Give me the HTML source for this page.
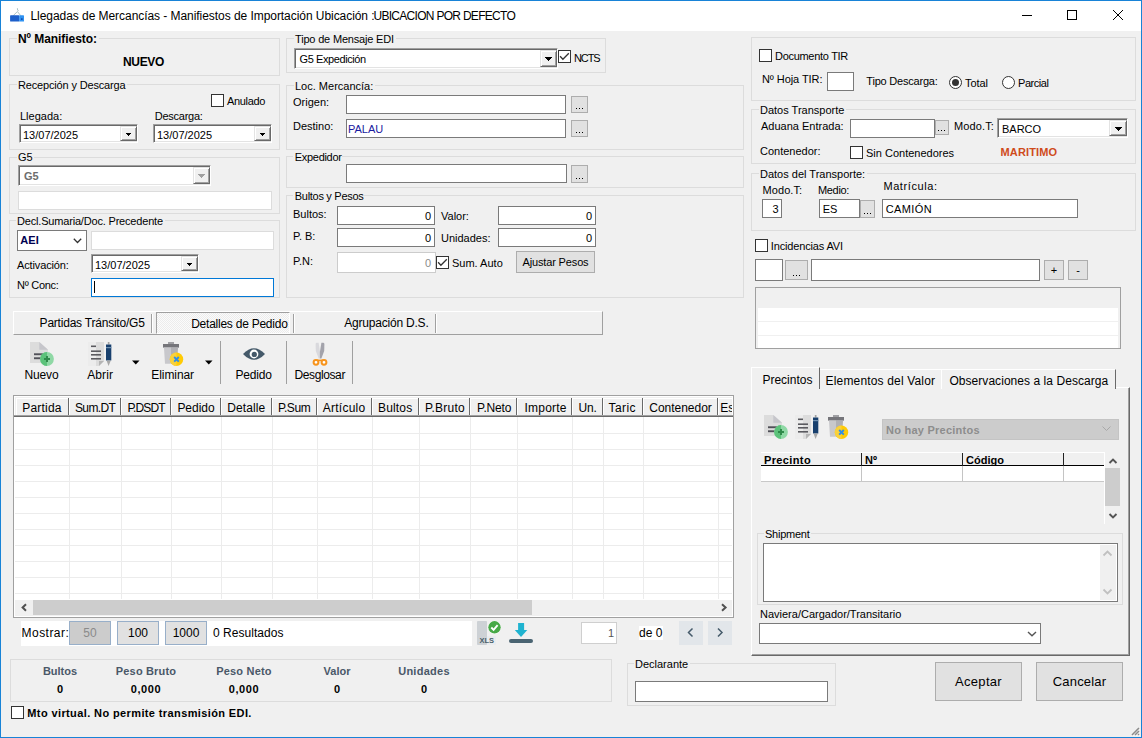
<!DOCTYPE html><html><head><meta charset="utf-8"><style>
html,body{margin:0;padding:0;width:1142px;height:738px;overflow:hidden;background:#f0f0f0}
body div{position:absolute;box-sizing:border-box}
.t{font-family:"Liberation Sans",sans-serif;line-height:20px;white-space:nowrap;height:20px}
</style></head><body>
<div style="left:0;top:0;width:1142px;height:738px;background:#f0f0f0;"></div>
<div style="left:0px;top:0px;width:1142px;height:31px;background:#fff;"></div>
<div style="left:0px;top:0px;width:1142px;height:1px;background:#1883d7;"></div>
<div style="left:0px;top:0px;width:1px;height:738px;background:#1883d7;"></div>
<div style="left:1141px;top:0px;width:1px;height:738px;background:#1883d7;"></div>
<div style="left:0px;top:737px;width:1142px;height:1px;background:#1883d7;"></div>
<svg style="position:absolute;left:8px;top:6px" width="18" height="18">
<path d="M9.4 5.5L4.4 10.5M9.4 5.5L12.7 9.6M9.4 2.2L9.6 4.2L10.6 4.6" stroke="#a5bcbc" stroke-width="0.9" fill="none"/>
<rect x="2.1" y="9.3" width="9.2" height="6.3" rx="0.6" fill="#1d5fca"/><rect x="11.2" y="9.3" width="4.8" height="6.3" rx="0.4" fill="#2f92f2"/><rect x="13" y="12.3" width="1.6" height="1.6" fill="#1448a8"/>
</svg>
<div class="t" style="left:30.50px;top:6px;font-size:12px;color:#000;letter-spacing:-0.055px;">Llegadas de Mercancías - Manifiestos de Importación Ubicación :</div>
<div class="t" style="left:373.50px;top:6px;font-size:12px;color:#000;letter-spacing:-0.711px;">UBICACION POR DEFECTO</div>
<div style="left:1022px;top:15px;width:10px;height:1px;background:#000;"></div>
<div style="left:1067px;top:10px;width:10px;height:10px;border:1px solid #000;"></div>
<svg style="position:absolute;left:1112px;top:9px" width="12" height="12"><path d="M1 1L11 11M11 1L1 11" stroke="#000" stroke-width="1"/></svg>
<div style="left:9px;top:38px;width:271px;height:38px;border:1px solid #dcdcdc;"></div>
<div style="left:17px;top:37px;width:82px;height:3px;background:#f0f0f0;"></div>
<div class="t" style="left:18.00px;top:29px;font-size:12px;color:#000;font-weight:bold;letter-spacing:-0.051px;">Nº Manifiesto:</div>
<div class="t" style="left:123.00px;top:52px;font-size:12px;color:#000;font-weight:bold;letter-spacing:-0.334px;">NUEVO</div>
<div style="left:9px;top:84px;width:271px;height:66px;border:1px solid #dcdcdc;"></div>
<div style="left:17px;top:83px;width:110px;height:3px;background:#f0f0f0;"></div>
<div class="t" style="left:18.00px;top:75px;font-size:11px;color:#000;letter-spacing:-0.161px;">Recepción y Descarga</div>
<div style="left:211px;top:94px;width:13px;height:13px;background:#fff;border:1px solid #333;"></div>
<div class="t" style="left:227.00px;top:91px;font-size:11px;color:#000;letter-spacing:-0.344px;">Anulado</div>
<div class="t" style="left:20.00px;top:106px;font-size:11px;color:#000;">Llegada:</div>
<div class="t" style="left:154.70px;top:106px;font-size:11px;color:#000;letter-spacing:-0.240px;">Descarga:</div>
<div style="left:19px;top:124px;width:119px;height:19px;background:#fff;border:1px solid;border-color:#a0a0a0 #fff #fff #a0a0a0;box-shadow:inset 1px 1px #696969,inset -1px -1px #e3e3e3;"></div>
<div style="left:120px;top:126px;width:17px;height:15px;background:#f0f0f0;border:1px solid;border-color:#e3e3e3 #696969 #696969 #e3e3e3;box-shadow:inset 1px 1px #fff,inset -1px -1px #a0a0a0;"></div>
<div style="left:126px;top:133px;width:5px;height:1px;background:#000;"></div>
<div style="left:127px;top:134px;width:3px;height:1px;background:#000;"></div>
<div style="left:128px;top:135px;width:1px;height:1px;background:#000;"></div>
<div class="t" style="left:23.00px;top:125px;font-size:11px;color:#000;">13/07/2025</div>
<div style="left:153px;top:124px;width:119px;height:19px;background:#fff;border:1px solid;border-color:#a0a0a0 #fff #fff #a0a0a0;box-shadow:inset 1px 1px #696969,inset -1px -1px #e3e3e3;"></div>
<div style="left:254px;top:126px;width:17px;height:15px;background:#f0f0f0;border:1px solid;border-color:#e3e3e3 #696969 #696969 #e3e3e3;box-shadow:inset 1px 1px #fff,inset -1px -1px #a0a0a0;"></div>
<div style="left:260px;top:133px;width:5px;height:1px;background:#000;"></div>
<div style="left:261px;top:134px;width:3px;height:1px;background:#000;"></div>
<div style="left:262px;top:135px;width:1px;height:1px;background:#000;"></div>
<div class="t" style="left:157.00px;top:125px;font-size:11px;color:#000;">13/07/2025</div>
<div style="left:9px;top:157px;width:271px;height:57px;border:1px solid #dcdcdc;"></div>
<div style="left:17px;top:156px;width:17px;height:3px;background:#f0f0f0;"></div>
<div class="t" style="left:18.00px;top:147px;font-size:11px;color:#000;">G5</div>
<div style="left:18px;top:165px;width:193px;height:21px;background:#fff;border:1px solid;border-color:#a0a0a0 #fff #fff #a0a0a0;box-shadow:inset 1px 1px #696969,inset -1px -1px #e3e3e3;"></div>
<div style="left:193px;top:167px;width:17px;height:17px;background:#f0f0f0;border:1px solid;border-color:#e3e3e3 #696969 #696969 #e3e3e3;box-shadow:inset 1px 1px #fff,inset -1px -1px #a0a0a0;"></div>
<div style="left:198px;top:174px;width:7px;height:1px;background:#a0a0a0;"></div>
<div style="left:199px;top:175px;width:5px;height:1px;background:#a0a0a0;"></div>
<div style="left:200px;top:176px;width:3px;height:1px;background:#a0a0a0;"></div>
<div style="left:201px;top:177px;width:1px;height:1px;background:#a0a0a0;"></div>
<div class="t" style="left:24.00px;top:166px;font-size:11px;color:#6d6d6d;font-weight:bold;">G5</div>
<div style="left:18px;top:191px;width:254px;height:19px;background:#fff;border:1px solid #dcdcdc;"></div>
<div style="left:9px;top:220px;width:271px;height:78px;border:1px solid #dcdcdc;"></div>
<div style="left:16px;top:219px;width:149px;height:3px;background:#f0f0f0;"></div>
<div class="t" style="left:17.00px;top:211px;font-size:11px;color:#000;letter-spacing:-0.182px;">Decl.Sumaria/Doc. Precedente</div>
<div style="left:17px;top:230px;width:70px;height:21px;background:#fff;border:1px solid #7a7a7a;"></div>
<div class="t" style="left:20.30px;top:230px;font-size:11px;color:#000050;font-weight:bold;letter-spacing:0.085px;">AEI</div>
<svg style="position:absolute;left:73px;top:238px" width="10" height="6"><polyline points="0.8,0.8 4.5,4.5 8.2,0.8" fill="none" stroke="#333" stroke-width="1.3"/></svg>
<div style="left:91px;top:231px;width:183px;height:19px;background:#fff;border:1px solid #dcdcdc;"></div>
<div class="t" style="left:17.00px;top:255px;font-size:11px;color:#000;letter-spacing:-0.129px;">Activación:</div>
<div style="left:91px;top:254px;width:108px;height:19px;background:#fff;border:1px solid;border-color:#a0a0a0 #fff #fff #a0a0a0;box-shadow:inset 1px 1px #696969,inset -1px -1px #e3e3e3;"></div>
<div style="left:181px;top:256px;width:17px;height:15px;background:#f0f0f0;border:1px solid;border-color:#e3e3e3 #696969 #696969 #e3e3e3;box-shadow:inset 1px 1px #fff,inset -1px -1px #a0a0a0;"></div>
<div style="left:187px;top:263px;width:5px;height:1px;background:#000;"></div>
<div style="left:188px;top:264px;width:3px;height:1px;background:#000;"></div>
<div style="left:189px;top:265px;width:1px;height:1px;background:#000;"></div>
<div class="t" style="left:95.00px;top:255px;font-size:11px;color:#000;">13/07/2025</div>
<div class="t" style="left:17.00px;top:275px;font-size:11px;color:#000;letter-spacing:-0.271px;">Nº Conc:</div>
<div style="left:91px;top:278px;width:183px;height:19px;background:#fff;border:1px solid #0078d7;"></div>
<div style="left:94px;top:281px;width:1px;height:12px;background:#000;"></div>
<div style="left:286px;top:38px;width:320px;height:35px;border:1px solid #dcdcdc;"></div>
<div style="left:294px;top:37px;width:102px;height:3px;background:#f0f0f0;"></div>
<div class="t" style="left:295.00px;top:29px;font-size:11px;color:#000;letter-spacing:-0.178px;">Tipo de Mensaje EDI</div>
<div style="left:294px;top:48px;width:264px;height:21px;background:#fff;border:1px solid;border-color:#a0a0a0 #fff #fff #a0a0a0;box-shadow:inset 1px 1px #696969,inset -1px -1px #e3e3e3;"></div>
<div style="left:540px;top:50px;width:17px;height:17px;background:#f0f0f0;border:1px solid;border-color:#e3e3e3 #696969 #696969 #e3e3e3;box-shadow:inset 1px 1px #fff,inset -1px -1px #a0a0a0;"></div>
<div style="left:545px;top:57px;width:7px;height:1px;background:#000;"></div>
<div style="left:546px;top:58px;width:5px;height:1px;background:#000;"></div>
<div style="left:547px;top:59px;width:3px;height:1px;background:#000;"></div>
<div style="left:548px;top:60px;width:1px;height:1px;background:#000;"></div>
<div class="t" style="left:299.50px;top:49px;font-size:11px;color:#000;letter-spacing:-0.407px;">G5 Expedición</div>
<div style="left:558px;top:50px;width:13px;height:13px;background:#fff;border:1px solid #333;"></div>
<svg style="position:absolute;left:558px;top:50px" width="13" height="13"><polyline points="2.1,6.3 4.9,9.2 10.8,3.3" fill="none" stroke="#333" stroke-width="1.3"/></svg>
<div class="t" style="left:574.00px;top:48px;font-size:11px;color:#000;letter-spacing:-1.109px;">NCTS</div>
<div style="left:286px;top:85px;width:458px;height:65px;border:1px solid #dcdcdc;"></div>
<div style="left:294px;top:84px;width:81px;height:3px;background:#f0f0f0;"></div>
<div class="t" style="left:295.00px;top:76px;font-size:11px;color:#000;">Loc. Mercancía:</div>
<div class="t" style="left:293.00px;top:92px;font-size:11px;color:#000;">Origen:</div>
<div style="left:346px;top:95px;width:220px;height:19px;background:#fff;border:1px solid #7a7a7a;"></div>
<div style="left:571px;top:96px;width:17px;height:17px;background:#e1e1e1;border:1px solid #adadad;"></div>
<div style="left:576px;top:108px;width:1px;height:1px;background:#000;"></div>
<div style="left:579px;top:108px;width:1px;height:1px;background:#000;"></div>
<div style="left:582px;top:108px;width:1px;height:1px;background:#000;"></div>
<div class="t" style="left:293.00px;top:116px;font-size:11px;color:#000;">Destino:</div>
<div style="left:346px;top:119px;width:220px;height:19px;background:#fff;border:1px solid #7a7a7a;"></div>
<div class="t" style="left:348.00px;top:119px;font-size:11px;color:#1a1aa0;">PALAU</div>
<div style="left:571px;top:120px;width:17px;height:17px;background:#e1e1e1;border:1px solid #adadad;"></div>
<div style="left:576px;top:132px;width:1px;height:1px;background:#000;"></div>
<div style="left:579px;top:132px;width:1px;height:1px;background:#000;"></div>
<div style="left:582px;top:132px;width:1px;height:1px;background:#000;"></div>
<div style="left:286px;top:156px;width:458px;height:32px;border:1px solid #dcdcdc;"></div>
<div style="left:293px;top:155px;width:49px;height:3px;background:#f0f0f0;"></div>
<div class="t" style="left:294.80px;top:147px;font-size:11px;color:#000;letter-spacing:-0.307px;">Expedidor</div>
<div style="left:346px;top:164px;width:221px;height:19px;background:#fff;border:1px solid #7a7a7a;"></div>
<div style="left:571px;top:165px;width:17px;height:18px;background:#e1e1e1;border:1px solid #adadad;"></div>
<div style="left:576px;top:178px;width:1px;height:1px;background:#000;"></div>
<div style="left:579px;top:178px;width:1px;height:1px;background:#000;"></div>
<div style="left:582px;top:178px;width:1px;height:1px;background:#000;"></div>
<div style="left:286px;top:195px;width:458px;height:103px;border:1px solid #dcdcdc;"></div>
<div style="left:293px;top:194px;width:71px;height:3px;background:#f0f0f0;"></div>
<div class="t" style="left:294.80px;top:186px;font-size:11px;color:#000;letter-spacing:-0.294px;">Bultos y Pesos</div>
<div class="t" style="left:293.00px;top:204px;font-size:11px;color:#000;">Bultos:</div>
<div style="left:337px;top:206px;width:98px;height:19px;background:#fff;border:1px solid #7a7a7a;"></div>
<div class="t" style="left:424.88px;top:206px;font-size:11px;color:#000;">0</div>
<div class="t" style="left:441.00px;top:206px;font-size:11px;color:#000;">Valor:</div>
<div style="left:498px;top:206px;width:98px;height:19px;background:#fff;border:1px solid #7a7a7a;"></div>
<div class="t" style="left:585.88px;top:206px;font-size:11px;color:#000;">0</div>
<div class="t" style="left:293.00px;top:226px;font-size:11px;color:#000;">P. B:</div>
<div style="left:337px;top:228px;width:98px;height:19px;background:#fff;border:1px solid #7a7a7a;"></div>
<div class="t" style="left:424.88px;top:228px;font-size:11px;color:#000;">0</div>
<div class="t" style="left:441.00px;top:228px;font-size:11px;color:#000;">Unidades:</div>
<div style="left:498px;top:228px;width:98px;height:19px;background:#fff;border:1px solid #7a7a7a;"></div>
<div class="t" style="left:585.88px;top:228px;font-size:11px;color:#000;">0</div>
<div class="t" style="left:293.00px;top:251px;font-size:11px;color:#000;">P.N:</div>
<div style="left:337px;top:252px;width:99px;height:21px;background:#fff;border:1px solid #cccccc;"></div>
<div class="t" style="left:424.88px;top:253px;font-size:11px;color:#8a8a8a;">0</div>
<div style="left:436px;top:256px;width:13px;height:13px;background:#fff;border:1px solid #333;"></div>
<svg style="position:absolute;left:436px;top:256px" width="13" height="13"><polyline points="2.1,6.3 4.9,9.2 10.8,3.3" fill="none" stroke="#333" stroke-width="1.3"/></svg>
<div class="t" style="left:452.00px;top:253px;font-size:11px;color:#000;">Sum. Auto</div>
<div style="left:516px;top:251px;width:79px;height:22px;background:#e1e1e1;border:1px solid #adadad;"></div>
<div class="t" style="left:522.50px;top:252px;font-size:11px;color:#000;letter-spacing:-0.147px;">Ajustar Pesos</div>
<div style="left:751px;top:37px;width:385px;height:64px;border:1px solid #dcdcdc;"></div>
<div style="left:759px;top:49px;width:13px;height:13px;background:#fff;border:1px solid #333;"></div>
<div class="t" style="left:775.00px;top:46px;font-size:11px;color:#000;letter-spacing:-0.297px;">Documento TIR</div>
<div class="t" style="left:762.00px;top:69px;font-size:11px;color:#000;letter-spacing:-0.073px;">Nº Hoja TIR:</div>
<div style="left:827px;top:72px;width:27px;height:19px;background:#fff;border:1px solid #7a7a7a;"></div>
<div class="t" style="left:866.30px;top:71px;font-size:11px;color:#000;letter-spacing:-0.208px;">Tipo Descarga:</div>
<svg style="position:absolute;left:948px;top:76px" width="15" height="14"><circle cx="7.5" cy="6.5" r="6" fill="#fff" stroke="#333" stroke-width="1"/><circle cx="7.5" cy="6.5" r="3.5" fill="#333"/></svg>
<div class="t" style="left:965.00px;top:73px;font-size:11px;color:#000;letter-spacing:-0.050px;">Total</div>
<svg style="position:absolute;left:1001px;top:76px" width="15" height="14"><circle cx="7.5" cy="6.5" r="6" fill="#fff" stroke="#333" stroke-width="1"/></svg>
<div class="t" style="left:1018.00px;top:73px;font-size:11px;color:#000;letter-spacing:-0.446px;">Parcial</div>
<div style="left:751px;top:109px;width:385px;height:55px;border:1px solid #dcdcdc;"></div>
<div style="left:759px;top:108px;width:87px;height:3px;background:#f0f0f0;"></div>
<div class="t" style="left:760.00px;top:100px;font-size:11px;color:#000;">Datos Transporte</div>
<div class="t" style="left:761.00px;top:116px;font-size:11px;color:#000;">Aduana Entrada:</div>
<div style="left:850px;top:119px;width:85px;height:19px;background:#fff;border:1px solid #7a7a7a;"></div>
<div style="left:935px;top:120px;width:14px;height:15px;background:#e1e1e1;border:1px solid #adadad;"></div>
<div style="left:938px;top:130px;width:1px;height:1px;background:#000;"></div>
<div style="left:941px;top:130px;width:1px;height:1px;background:#000;"></div>
<div style="left:944px;top:130px;width:1px;height:1px;background:#000;"></div>
<div class="t" style="left:954.00px;top:116px;font-size:11px;color:#000;letter-spacing:0.121px;">Modo.T:</div>
<div style="left:997px;top:118px;width:131px;height:20px;background:#fff;border:1px solid;border-color:#a0a0a0 #fff #fff #a0a0a0;box-shadow:inset 1px 1px #696969,inset -1px -1px #e3e3e3;"></div>
<div style="left:1109px;top:120px;width:18px;height:16px;background:#f0f0f0;border:1px solid;border-color:#e3e3e3 #696969 #696969 #e3e3e3;box-shadow:inset 1px 1px #fff,inset -1px -1px #a0a0a0;"></div>
<div style="left:1115px;top:127px;width:7px;height:1px;background:#000;"></div>
<div style="left:1116px;top:128px;width:5px;height:1px;background:#000;"></div>
<div style="left:1117px;top:129px;width:3px;height:1px;background:#000;"></div>
<div style="left:1118px;top:130px;width:1px;height:1px;background:#000;"></div>
<div class="t" style="left:1002.00px;top:119px;font-size:11px;color:#000;">BARCO</div>
<div class="t" style="left:760.00px;top:141px;font-size:11px;color:#000;">Contenedor:</div>
<div style="left:850px;top:146px;width:13px;height:13px;background:#fff;border:1px solid #333;"></div>
<div class="t" style="left:866.00px;top:143px;font-size:11px;color:#000;">Sin Contenedores</div>
<div class="t" style="left:1000.50px;top:142px;font-size:11px;color:#cf4b1b;font-weight:bold;letter-spacing:0.138px;">MARITIMO</div>
<div style="left:751px;top:173px;width:385px;height:58px;border:1px solid #dcdcdc;"></div>
<div style="left:759px;top:172px;width:108px;height:3px;background:#f0f0f0;"></div>
<div class="t" style="left:760.00px;top:164px;font-size:11px;color:#000;">Datos del Transporte:</div>
<div class="t" style="left:762.60px;top:180px;font-size:11px;color:#000;letter-spacing:0.063px;">Modo.T:</div>
<div class="t" style="left:818.00px;top:180px;font-size:11px;color:#000;letter-spacing:-0.339px;">Medio:</div>
<div class="t" style="left:883.40px;top:176px;font-size:11px;color:#000;letter-spacing:0.599px;">Matrícula:</div>
<div style="left:762px;top:199px;width:20px;height:19px;background:#fff;border:1px solid #7a7a7a;"></div>
<div class="t" style="left:772.38px;top:199px;font-size:11px;color:#000;">3</div>
<div style="left:819px;top:199px;width:41px;height:19px;background:#fff;border:1px solid #7a7a7a;"></div>
<div class="t" style="left:822.70px;top:199px;font-size:11px;color:#000;">ES</div>
<div style="left:860px;top:200px;width:15px;height:18px;background:#e1e1e1;border:1px solid #adadad;"></div>
<div style="left:864px;top:213px;width:1px;height:1px;background:#000;"></div>
<div style="left:867px;top:213px;width:1px;height:1px;background:#000;"></div>
<div style="left:870px;top:213px;width:1px;height:1px;background:#000;"></div>
<div style="left:882px;top:199px;width:196px;height:19px;background:#fff;border:1px solid #7a7a7a;"></div>
<div class="t" style="left:885.70px;top:199px;font-size:11px;color:#000;letter-spacing:0.400px;">CAMIÓN</div>
<div style="left:755px;top:239px;width:13px;height:13px;background:#fff;border:1px solid #333;"></div>
<div class="t" style="left:770.80px;top:236px;font-size:11px;color:#000;letter-spacing:-0.150px;">Incidencias AVI</div>
<div style="left:755px;top:259px;width:28px;height:22px;background:#fff;border:1px solid #7a7a7a;"></div>
<div style="left:785px;top:260px;width:23px;height:20px;background:#e1e1e1;border:1px solid #adadad;"></div>
<div style="left:793px;top:275px;width:1px;height:1px;background:#000;"></div>
<div style="left:796px;top:275px;width:1px;height:1px;background:#000;"></div>
<div style="left:799px;top:275px;width:1px;height:1px;background:#000;"></div>
<div style="left:811px;top:259px;width:229px;height:22px;background:#fff;border:1px solid #7a7a7a;"></div>
<div style="left:1044px;top:260px;width:20px;height:20px;background:#e1e1e1;border:1px solid #adadad;"></div>
<div class="t" style="left:1050.79px;top:260px;font-size:11px;color:#000;">+</div>
<div style="left:1068px;top:260px;width:20px;height:20px;background:#e1e1e1;border:1px solid #adadad;"></div>
<div class="t" style="left:1076.17px;top:260px;font-size:11px;color:#000;">-</div>
<div style="left:755px;top:287px;width:366px;height:62px;background:#f0f0f0;border:1px solid #a0a0a0;"></div>
<div style="left:758px;top:308px;width:360px;height:40px;background:#fff;"></div>
<div style="left:758px;top:321px;width:360px;height:1px;background:#f0f0f0;"></div>
<div style="left:758px;top:335px;width:360px;height:1px;background:#f0f0f0;"></div>
<div style="left:13px;top:311px;width:590px;height:24px;border:1px solid;border-color:#fff #a0a0a0 #a0a0a0 #fff;"></div>
<div class="t" style="left:39.60px;top:313px;font-size:12px;color:#000;letter-spacing:-0.218px;">Partidas Tránsito/G5</div>
<div style="left:151px;top:314px;width:1px;height:19px;background:#a0a0a0;"></div>
<div style="left:152px;top:314px;width:1px;height:19px;background:#fff;"></div>
<div style="left:156px;top:312px;width:134px;height:22px;border:1px solid;border-color:#a0a0a0 #fff #fff #a0a0a0;background:repeating-conic-gradient(#fbfbfb 0 25%,#ececec 0 50%) 0 0/2px 2px;"></div>
<div class="t" style="left:191.20px;top:314px;font-size:12px;color:#000;letter-spacing:-0.240px;">Detalles de Pedido</div>
<div style="left:293px;top:314px;width:1px;height:19px;background:#a0a0a0;"></div>
<div style="left:294px;top:314px;width:1px;height:19px;background:#fff;"></div>
<div class="t" style="left:344.20px;top:313px;font-size:12px;color:#000;letter-spacing:-0.204px;">Agrupación D.S.</div>
<div style="left:435px;top:314px;width:1px;height:19px;background:#a0a0a0;"></div>
<div style="left:436px;top:314px;width:1px;height:19px;background:#fff;"></div>
<svg style="position:absolute;left:0;top:0;overflow:visible" width="1" height="1">
<path d="M30 342H39.3L48 349.8V363H30Z" fill="#dcdcdc"/><path d="M39.3 342V349.8H48Z" fill="#c6c6cb"/><rect x="34" y="353.3" width="9" height="1.9" fill="#505058"/><rect x="34" y="357.3" width="8" height="1.9" fill="#505058"/><circle cx="47" cy="359" r="6.9" fill="#8fd8a5"/><path d="M47 352.1A6.9 6.9 0 0 0 47 365.9Z" fill="#5cc27a"/><rect x="44" y="358" width="6" height="2" fill="#2f8a4a"/><rect x="46" y="356" width="2" height="6" fill="#2f8a4a"/><rect x="88" y="342" width="8" height="24" fill="#ececec"/><path d="M96 342H104V361L99 366H96Z" fill="#dcdcdc"/><path d="M104 361L99 366V361Z" fill="#b5b5b5"/><rect x="91" y="345.5" width="5" height="1.6" fill="#5a5a5f"/><rect x="91" y="350.4" width="10" height="1.6" fill="#5a5a5f"/><rect x="91" y="354" width="10" height="1.6" fill="#5a5a5f"/><rect x="91" y="358" width="10" height="1.6" fill="#5a5a5f"/><rect x="107.8" y="342" width="1.7" height="2.5" fill="#a0a0a0"/><rect x="106" y="344.5" width="5.3" height="16" fill="#18406e"/><rect x="106" y="347" width="5.3" height="1.2" fill="#6d8fb0"/><path d="M106.5 360.5H110.8L108.6 366Z" fill="#a8a8a8"/><rect x="168" y="342" width="6" height="2" fill="#a0a0a4"/><rect x="163" y="344" width="16" height="3.6" fill="#75757a"/><path d="M164 347.6H171V363.7H165Z" fill="#c8c8cc"/><path d="M171 347.6H178L177 363.7H171Z" fill="#b0b0b4"/><circle cx="176.5" cy="359.3" r="6.7" fill="#ffcb05"/><path d="M176.5 352.6A6.7 6.7 0 0 0 176.5 366.0Z" fill="#f9d13b"/><path d="M174.2 357.0L178.8 361.6M178.8 357.0L174.2 361.6" stroke="#2f8ee8" stroke-width="1.9"/>
<path d="M132 360.5H139.5L135.75 364.5Z" fill="#000"/><path d="M205 360.5H212.5L208.75 364.5Z" fill="#000"/>
<!-- Pedido -->
<path d="M243 354Q254 342.5 265 354Q254 365.5 243 354Z" fill="#455a6a"/><circle cx="254" cy="354" r="4.4" fill="#fff"/><circle cx="254.3" cy="354.4" r="2.6" fill="#455a6a"/>
<!-- Desglosar -->
<path d="M315.6 344Q315.6 342.8 316.9 342.8H318.6L320.1 352V358.6H318.6L315.8 351Z" fill="#d9d9dd"/><path d="M324.4 344Q324.4 342.8 323.1 342.8H321.4L319.9 352V358.6H321.4L324.2 351Z" fill="#a3a3ab"/>
<rect x="317" y="359.6" width="6" height="1.6" fill="#f7941d"/><circle cx="316" cy="362.3" r="2.4" fill="#fff" stroke="#f7941d" stroke-width="2"/><circle cx="324" cy="362.3" r="2.4" fill="#fff" stroke="#f7941d" stroke-width="2"/>
</svg>
<div class="t" style="left:24.60px;top:365px;font-size:12px;color:#000;letter-spacing:-0.178px;">Nuevo</div>
<div class="t" style="left:87.20px;top:365px;font-size:12px;color:#000;letter-spacing:0.091px;">Abrir</div>
<div class="t" style="left:151.30px;top:365px;font-size:12px;color:#000;letter-spacing:-0.082px;">Eliminar</div>
<div class="t" style="left:235.40px;top:365px;font-size:12px;color:#000;letter-spacing:-0.177px;">Pedido</div>
<div class="t" style="left:294.50px;top:365px;font-size:12px;color:#000;letter-spacing:-0.392px;">Desglosar</div>
<div style="left:220px;top:341px;width:1px;height:43px;background:#a0a0a0;"></div>
<div style="left:286px;top:341px;width:1px;height:43px;background:#a0a0a0;"></div>
<div style="left:352px;top:341px;width:1px;height:43px;background:#a0a0a0;"></div>
<div style="left:13px;top:395px;width:721px;height:223px;background:#fff;border:1px solid #a0a0a0;"></div>
<div style="left:14px;top:396px;width:719px;height:221px;border:1px solid #fff;"></div>
<div style="left:15px;top:397px;width:717px;height:20px;background:#f0f0f0;"></div>
<div style="left:16px;top:398px;width:1px;height:18px;background:#fff;"></div>
<div style="left:16px;top:398px;width:52px;height:1px;background:#fff;"></div>
<div style="left:68px;top:398px;width:1px;height:18px;background:#696969;"></div>
<div style="left:69px;top:398px;width:1px;height:18px;background:#fff;"></div>
<div style="left:69px;top:398px;width:51px;height:1px;background:#fff;"></div>
<div style="left:120px;top:398px;width:1px;height:18px;background:#696969;"></div>
<div style="left:121px;top:398px;width:1px;height:18px;background:#fff;"></div>
<div style="left:121px;top:398px;width:49px;height:1px;background:#fff;"></div>
<div style="left:170px;top:398px;width:1px;height:18px;background:#696969;"></div>
<div style="left:171px;top:398px;width:1px;height:18px;background:#fff;"></div>
<div style="left:171px;top:398px;width:49px;height:1px;background:#fff;"></div>
<div style="left:220px;top:398px;width:1px;height:18px;background:#696969;"></div>
<div style="left:221px;top:398px;width:1px;height:18px;background:#fff;"></div>
<div style="left:221px;top:398px;width:50px;height:1px;background:#fff;"></div>
<div style="left:271px;top:398px;width:1px;height:18px;background:#696969;"></div>
<div style="left:272px;top:398px;width:1px;height:18px;background:#fff;"></div>
<div style="left:272px;top:398px;width:44px;height:1px;background:#fff;"></div>
<div style="left:316px;top:398px;width:1px;height:18px;background:#696969;"></div>
<div style="left:317px;top:398px;width:1px;height:18px;background:#fff;"></div>
<div style="left:317px;top:398px;width:54px;height:1px;background:#fff;"></div>
<div style="left:371px;top:398px;width:1px;height:18px;background:#696969;"></div>
<div style="left:372px;top:398px;width:1px;height:18px;background:#fff;"></div>
<div style="left:372px;top:398px;width:46px;height:1px;background:#fff;"></div>
<div style="left:418px;top:398px;width:1px;height:18px;background:#696969;"></div>
<div style="left:419px;top:398px;width:1px;height:18px;background:#fff;"></div>
<div style="left:419px;top:398px;width:50px;height:1px;background:#fff;"></div>
<div style="left:469px;top:398px;width:1px;height:18px;background:#696969;"></div>
<div style="left:470px;top:398px;width:1px;height:18px;background:#fff;"></div>
<div style="left:470px;top:398px;width:46px;height:1px;background:#fff;"></div>
<div style="left:516px;top:398px;width:1px;height:18px;background:#696969;"></div>
<div style="left:517px;top:398px;width:1px;height:18px;background:#fff;"></div>
<div style="left:517px;top:398px;width:54px;height:1px;background:#fff;"></div>
<div style="left:571px;top:398px;width:1px;height:18px;background:#696969;"></div>
<div style="left:572px;top:398px;width:1px;height:18px;background:#fff;"></div>
<div style="left:572px;top:398px;width:30px;height:1px;background:#fff;"></div>
<div style="left:602px;top:398px;width:1px;height:18px;background:#696969;"></div>
<div style="left:603px;top:398px;width:1px;height:18px;background:#fff;"></div>
<div style="left:603px;top:398px;width:39px;height:1px;background:#fff;"></div>
<div style="left:642px;top:398px;width:1px;height:18px;background:#696969;"></div>
<div style="left:643px;top:398px;width:1px;height:18px;background:#fff;"></div>
<div style="left:643px;top:398px;width:74px;height:1px;background:#fff;"></div>
<div style="left:717px;top:398px;width:1px;height:18px;background:#696969;"></div>
<div style="left:718px;top:398px;width:1px;height:18px;background:#fff;"></div>
<div style="left:718px;top:398px;width:14px;height:1px;background:#fff;"></div>
<div style="left:14px;top:415px;width:719px;height:1px;background:#a0a0a0;"></div>
<div style="left:14px;top:416px;width:719px;height:1px;background:#696969;"></div>
<div class="t" style="left:22.30px;top:398px;font-size:12px;color:#000;letter-spacing:0.198px;">Partida</div>
<div class="t" style="left:75.00px;top:398px;font-size:12px;color:#000;letter-spacing:-0.633px;">Sum.DT</div>
<div class="t" style="left:127.50px;top:398px;font-size:12px;color:#000;letter-spacing:-0.876px;">P.DSDT</div>
<div class="t" style="left:177.40px;top:398px;font-size:12px;color:#000;letter-spacing:-0.027px;">Pedido</div>
<div class="t" style="left:227.30px;top:398px;font-size:12px;color:#000;letter-spacing:0.092px;">Detalle</div>
<div class="t" style="left:277.90px;top:398px;font-size:12px;color:#000;letter-spacing:-0.431px;">P.Sum</div>
<div class="t" style="left:322.80px;top:398px;font-size:12px;color:#000;letter-spacing:0.241px;">Artículo</div>
<div class="t" style="left:378.10px;top:398px;font-size:12px;color:#000;letter-spacing:0.143px;">Bultos</div>
<div class="t" style="left:424.90px;top:398px;font-size:12px;color:#000;letter-spacing:0.207px;">P.Bruto</div>
<div class="t" style="left:477.10px;top:398px;font-size:12px;color:#000;letter-spacing:-0.154px;">P.Neto</div>
<div class="t" style="left:524.60px;top:398px;font-size:12px;color:#000;letter-spacing:0.190px;">Importe</div>
<div class="t" style="left:578.60px;top:398px;font-size:12px;color:#000;letter-spacing:-0.191px;">Un.</div>
<div class="t" style="left:608.60px;top:398px;font-size:12px;color:#000;letter-spacing:0.411px;">Taric</div>
<div class="t" style="left:649.30px;top:398px;font-size:12px;color:#000;letter-spacing:-0.020px;">Contenedor</div>
<div style="left:718px;top:398px;width:14px;height:18px;overflow:hidden"><div class="t" style="left:2.3px;top:0px;font-size:12px">Es</div></div>
<div style="left:15px;top:433px;width:717px;height:1px;background:#ececec;"></div>
<div style="left:15px;top:449px;width:717px;height:1px;background:#ececec;"></div>
<div style="left:15px;top:465px;width:717px;height:1px;background:#ececec;"></div>
<div style="left:15px;top:481px;width:717px;height:1px;background:#ececec;"></div>
<div style="left:15px;top:497px;width:717px;height:1px;background:#ececec;"></div>
<div style="left:15px;top:513px;width:717px;height:1px;background:#ececec;"></div>
<div style="left:15px;top:529px;width:717px;height:1px;background:#ececec;"></div>
<div style="left:15px;top:545px;width:717px;height:1px;background:#ececec;"></div>
<div style="left:15px;top:561px;width:717px;height:1px;background:#ececec;"></div>
<div style="left:15px;top:577px;width:717px;height:1px;background:#ececec;"></div>
<div style="left:15px;top:593px;width:717px;height:1px;background:#ececec;"></div>
<div style="left:69px;top:417px;width:1px;height:182px;background:#ececec;"></div>
<div style="left:121px;top:417px;width:1px;height:182px;background:#ececec;"></div>
<div style="left:171px;top:417px;width:1px;height:182px;background:#ececec;"></div>
<div style="left:221px;top:417px;width:1px;height:182px;background:#ececec;"></div>
<div style="left:272px;top:417px;width:1px;height:182px;background:#ececec;"></div>
<div style="left:317px;top:417px;width:1px;height:182px;background:#ececec;"></div>
<div style="left:372px;top:417px;width:1px;height:182px;background:#ececec;"></div>
<div style="left:419px;top:417px;width:1px;height:182px;background:#ececec;"></div>
<div style="left:470px;top:417px;width:1px;height:182px;background:#ececec;"></div>
<div style="left:517px;top:417px;width:1px;height:182px;background:#ececec;"></div>
<div style="left:572px;top:417px;width:1px;height:182px;background:#ececec;"></div>
<div style="left:603px;top:417px;width:1px;height:182px;background:#ececec;"></div>
<div style="left:643px;top:417px;width:1px;height:182px;background:#ececec;"></div>
<div style="left:718px;top:417px;width:1px;height:182px;background:#ececec;"></div>
<div style="left:15px;top:600px;width:717px;height:16px;background:#f0f0f0;"></div>
<div style="left:33px;top:600px;width:499px;height:15px;background:#cdcdcd;"></div>
<svg style="position:absolute;left:20px;top:603px" width="9" height="9"><polyline points="6,1.2 2.6,4.5 6,7.8" fill="none" stroke="#505050" stroke-width="2"/></svg>
<svg style="position:absolute;left:720px;top:603px" width="9" height="9"><polyline points="2,1.2 5.6,4.5 2,7.8" fill="none" stroke="#505050" stroke-width="2"/></svg>
<div style="left:21px;top:621px;width:451px;height:25px;background:#fff;"></div>
<div class="t" style="left:21.60px;top:623px;font-size:12px;color:#000;letter-spacing:0.450px;">Mostrar:</div>
<div style="left:69px;top:621px;width:42px;height:24px;background:#cccccc;border:1px solid #98afc9;"></div>
<div class="t" style="left:83.33px;top:623px;font-size:12px;color:#8a8a8a;">50</div>
<div style="left:117px;top:621px;width:42px;height:24px;background:#e1e1e1;border:1px solid #98afc9;"></div>
<div class="t" style="left:127.99px;top:623px;font-size:12px;color:#000;">100</div>
<div style="left:165px;top:621px;width:42px;height:24px;background:#e1e1e1;border:1px solid #98afc9;"></div>
<div class="t" style="left:172.66px;top:623px;font-size:12px;color:#000;">1000</div>
<div class="t" style="left:213.00px;top:623px;font-size:12px;color:#000;letter-spacing:0.039px;">0 Resultados</div>
<svg style="position:absolute;left:476px;top:620px" width="60" height="26">
<rect x="1" y="1" width="10" height="24" rx="1" fill="#cdd1d5"/><rect x="11" y="16" width="9" height="9" fill="#e9ecef"/>
<text x="3.6" y="22.8" font-family="Liberation Sans" font-weight="bold" font-size="8" textLength="14.5" lengthAdjust="spacingAndGlyphs" fill="#4a5e6a">XLS</text>
<circle cx="18.5" cy="7.3" r="6.6" fill="#fff"/><circle cx="18.5" cy="7.3" r="6.2" fill="#47a947"/><polyline points="15.3,7.5 17.6,9.8 21.6,5.2" fill="none" stroke="#fff" stroke-width="1.9"/>
<rect x="33" y="19" width="24" height="4" rx="2" fill="#4a6472"/><rect x="42.1" y="3" width="6" height="7.5" fill="#1fb3d0"/><path d="M38.8 10H51.3L45 17Z" fill="#1fb3d0"/>
</svg>
<div style="left:581px;top:622px;width:36px;height:22px;background:#fff;border:1px solid #7a7a7a;border-color:#cfcfcf;"></div>
<div class="t" style="left:607.88px;top:623px;font-size:11px;color:#555;">1</div>
<div style="left:639px;top:626px;width:24px;height:14px;background:#fff;"></div>
<div class="t" style="left:639.00px;top:623px;font-size:12px;color:#000;">de 0</div>
<div style="left:679px;top:621px;width:24px;height:24px;background:#e2e6ea;"></div>
<div style="left:708px;top:621px;width:24px;height:24px;background:#e2e6ea;"></div>
<svg style="position:absolute;left:686px;top:627px" width="10" height="12"><polyline points="6.5,1.5 2.5,5.5 6.5,9.5" fill="none" stroke="#455a6a" stroke-width="1.5"/></svg>
<svg style="position:absolute;left:715px;top:627px" width="10" height="12"><polyline points="3,1.5 7,5.5 3,9.5" fill="none" stroke="#455a6a" stroke-width="1.5"/></svg>
<div style="left:10px;top:659px;width:602px;height:43px;border:1px solid #dcdcdc;"></div>
<div class="t" style="left:42.89px;top:661px;font-size:11px;color:#4a5868;font-weight:bold;">Bultos</div>
<div class="t" style="left:56.94px;top:679px;font-size:11px;color:#000;font-weight:bold;">0</div>
<div class="t" style="left:115.80px;top:661px;font-size:11px;color:#4a5868;font-weight:bold;letter-spacing:0.171px;">Peso Bruto</div>
<div class="t" style="left:130.70px;top:679px;font-size:11px;color:#000;font-weight:bold;letter-spacing:0.608px;">0,000</div>
<div class="t" style="left:216.20px;top:661px;font-size:11px;color:#4a5868;font-weight:bold;letter-spacing:0.199px;">Peso Neto</div>
<div class="t" style="left:228.70px;top:679px;font-size:11px;color:#000;font-weight:bold;letter-spacing:0.608px;">0,000</div>
<div class="t" style="left:323.54px;top:661px;font-size:11px;color:#4a5868;font-weight:bold;">Valor</div>
<div class="t" style="left:333.94px;top:679px;font-size:11px;color:#000;font-weight:bold;">0</div>
<div class="t" style="left:398.20px;top:661px;font-size:11px;color:#4a5868;font-weight:bold;letter-spacing:0.259px;">Unidades</div>
<div class="t" style="left:420.94px;top:679px;font-size:11px;color:#000;font-weight:bold;">0</div>
<div style="left:11px;top:706px;width:13px;height:13px;background:#fff;border:1px solid #333;"></div>
<div class="t" style="left:27.30px;top:703px;font-size:11px;color:#000;font-weight:bold;letter-spacing:0.387px;">Mto virtual. No permite transmisión EDI.</div>
<div style="left:627px;top:663px;width:209px;height:43px;border:1px solid #dcdcdc;"></div>
<div style="left:634px;top:662px;width:56px;height:3px;background:#f0f0f0;"></div>
<div class="t" style="left:635.00px;top:654px;font-size:11px;color:#000;">Declarante</div>
<div style="left:635px;top:681px;width:193px;height:21px;background:#fff;border:1px solid #7a7a7a;"></div>
<div style="left:751px;top:387px;width:379px;height:269px;border:1px solid;border-color:#fff #696969 #696969 #fff;box-shadow:inset -1px -1px #a0a0a0;"></div>
<div style="left:819px;top:369px;width:123px;height:20px;background:#f0f0f0;border:1px solid;border-bottom:none;border-color:#fff #696969 #696969 #fff;"></div>
<div style="left:941px;top:369px;width:175px;height:20px;background:#f0f0f0;border:1px solid;border-bottom:none;border-color:#fff #696969 #696969 #fff;"></div>
<div style="left:751px;top:367px;width:69px;height:22px;background:#f0f0f0;border:1px solid;border-bottom:none;border-color:#fff #696969 #696969 #fff;"></div>
<div class="t" style="left:762.40px;top:370px;font-size:12px;color:#000;">Precintos</div>
<div class="t" style="left:825.60px;top:371px;font-size:12px;color:#000;letter-spacing:0.159px;">Elementos del Valor</div>
<div class="t" style="left:949.40px;top:371px;font-size:12px;color:#000;letter-spacing:0.052px;">Observaciones a la Descarga</div>
<svg style="position:absolute;left:0;top:0;overflow:visible" width="1" height="1">
<path d="M764 415H773.3L782 422.8V436H764Z" fill="#dcdcdc"/><path d="M773.3 415V422.8H782Z" fill="#c6c6cb"/><rect x="768" y="426.3" width="9" height="1.9" fill="#505058"/><rect x="768" y="430.3" width="8" height="1.9" fill="#505058"/><circle cx="781" cy="432" r="6.9" fill="#8fd8a5"/><path d="M781 425.1A6.9 6.9 0 0 0 781 438.9Z" fill="#5cc27a"/><rect x="778" y="431" width="6" height="2" fill="#2f8a4a"/><rect x="780" y="429" width="2" height="6" fill="#2f8a4a"/><rect x="795" y="415" width="8" height="24" fill="#ececec"/><path d="M803 415H811V434L806 439H803Z" fill="#dcdcdc"/><path d="M811 434L806 439V434Z" fill="#b5b5b5"/><rect x="798" y="418.5" width="5" height="1.6" fill="#5a5a5f"/><rect x="798" y="423.4" width="10" height="1.6" fill="#5a5a5f"/><rect x="798" y="427" width="10" height="1.6" fill="#5a5a5f"/><rect x="798" y="431" width="10" height="1.6" fill="#5a5a5f"/><rect x="814.8" y="415" width="1.7" height="2.5" fill="#a0a0a0"/><rect x="813" y="417.5" width="5.3" height="16" fill="#18406e"/><rect x="813" y="420" width="5.3" height="1.2" fill="#6d8fb0"/><path d="M813.5 433.5H817.8L815.6 439Z" fill="#a8a8a8"/><rect x="833" y="415" width="6" height="2" fill="#a0a0a4"/><rect x="828" y="417" width="16" height="3.6" fill="#75757a"/><path d="M829 420.6H836V436.7H830Z" fill="#c8c8cc"/><path d="M836 420.6H843L842 436.7H836Z" fill="#b0b0b4"/><circle cx="841.5" cy="432.3" r="6.7" fill="#ffcb05"/><path d="M841.5 425.6A6.7 6.7 0 0 0 841.5 439.0Z" fill="#f9d13b"/><path d="M839.2 430.0L843.8 434.6M843.8 430.0L839.2 434.6" stroke="#2f8ee8" stroke-width="1.9"/>
</svg>
<div style="left:882px;top:419px;width:237px;height:21px;background:#cccccc;border:1px solid #c4c4c4;"></div>
<div class="t" style="left:886.00px;top:420px;font-size:11px;color:#8d8d8d;font-weight:bold;letter-spacing:0.243px;">No hay Precintos</div>
<svg style="position:absolute;left:1102px;top:426px" width="10" height="6"><polyline points="0.5,0.5 4.5,4.5 8.5,0.5" fill="none" stroke="#a8a8a8" stroke-width="1"/></svg>
<div style="left:761px;top:452px;width:344px;height:14px;background:#f0f0f0;"></div>
<div style="left:761px;top:465px;width:343px;height:1px;background:#000;"></div>
<div style="left:861px;top:452px;width:1px;height:14px;background:#222;"></div>
<div style="left:962px;top:452px;width:1px;height:14px;background:#222;"></div>
<div style="left:1063px;top:452px;width:1px;height:14px;background:#222;"></div>
<div style="left:761px;top:466px;width:343px;height:15px;background:#fff;"></div>
<div style="left:861px;top:466px;width:1px;height:15px;background:#c4c4c4;"></div>
<div style="left:962px;top:466px;width:1px;height:15px;background:#c4c4c4;"></div>
<div style="left:1063px;top:466px;width:1px;height:15px;background:#c4c4c4;"></div>
<div style="left:761px;top:481px;width:343px;height:1px;background:#c8c8c8;"></div>
<div style="left:761px;top:452px;width:343px;height:1px;background:#fff;"></div>
<div class="t" style="left:764.00px;top:450px;font-size:11px;color:#000;font-weight:bold;letter-spacing:0.371px;">Precinto</div>
<div class="t" style="left:865.00px;top:450px;font-size:11px;color:#000;font-weight:bold;">Nº</div>
<div class="t" style="left:966.00px;top:450px;font-size:11px;color:#000;font-weight:bold;">Código</div>
<div style="left:1105px;top:452px;width:16px;height:72px;background:#f0f0f0;"></div>
<div style="left:1104px;top:452px;width:1px;height:72px;background:#fff;"></div>
<div style="left:1105px;top:468px;width:15px;height:38px;background:#cdcdcd;"></div>
<svg style="position:absolute;left:1108px;top:457px" width="10" height="8"><polyline points="1.5,6 5,2.5 8.5,6" fill="none" stroke="#555" stroke-width="1.9"/></svg>
<svg style="position:absolute;left:1108px;top:512px" width="10" height="8"><polyline points="1.5,2 5,5.5 8.5,2" fill="none" stroke="#555" stroke-width="1.9"/></svg>
<div style="left:757px;top:533px;width:366px;height:72px;border:1px solid #dcdcdc;"></div>
<div style="left:764px;top:532px;width:47px;height:3px;background:#f0f0f0;"></div>
<div class="t" style="left:765.00px;top:524px;font-size:11px;color:#000;letter-spacing:-0.250px;">Shipment</div>
<div style="left:763px;top:543px;width:355px;height:59px;background:#fff;border:1px solid #7a7a7a;"></div>
<div style="left:1100px;top:545px;width:16px;height:55px;background:#f0f0f0;"></div>
<svg style="position:absolute;left:1102px;top:550px" width="11" height="7"><polyline points="1.5,5.5 5.5,1.5 9.5,5.5" fill="none" stroke="#c0c0c0" stroke-width="1.8"/></svg>
<svg style="position:absolute;left:1102px;top:588px" width="11" height="7"><polyline points="1.5,1.5 5.5,5.5 9.5,1.5" fill="none" stroke="#c0c0c0" stroke-width="1.8"/></svg>
<div class="t" style="left:760.00px;top:604px;font-size:11px;color:#000;">Naviera/Cargador/Transitario</div>
<div style="left:759px;top:623px;width:282px;height:21px;background:#fff;border:1px solid #7a7a7a;"></div>
<svg style="position:absolute;left:1027px;top:631px" width="11" height="7"><polyline points="1,1 5,4.8 9,1" fill="none" stroke="#555" stroke-width="1.4"/></svg>
<div style="left:935px;top:662px;width:87px;height:39px;background:#e1e1e1;border:1px solid #adadad;"></div>
<div class="t" style="left:955.00px;top:672px;font-size:13px;color:#000;letter-spacing:0.312px;">Aceptar</div>
<div style="left:1036px;top:662px;width:87px;height:39px;background:#e1e1e1;border:1px solid #adadad;"></div>
<div class="t" style="left:1052.75px;top:672px;font-size:13px;color:#000;letter-spacing:0.182px;">Cancelar</div>
<svg style="position:absolute;left:1128px;top:724px" width="13" height="13"><path d="M4.5 11.5L11.5 4.5M7.5 11.5L11.5 7.5M10.5 11.5L11.5 10.5" stroke="#fff" stroke-width="1.5"/><path d="M4 11L11 4M7 11L11 7M10 11L11 10" stroke="#8c8c8c" stroke-width="1.6"/></svg>
</body></html>
